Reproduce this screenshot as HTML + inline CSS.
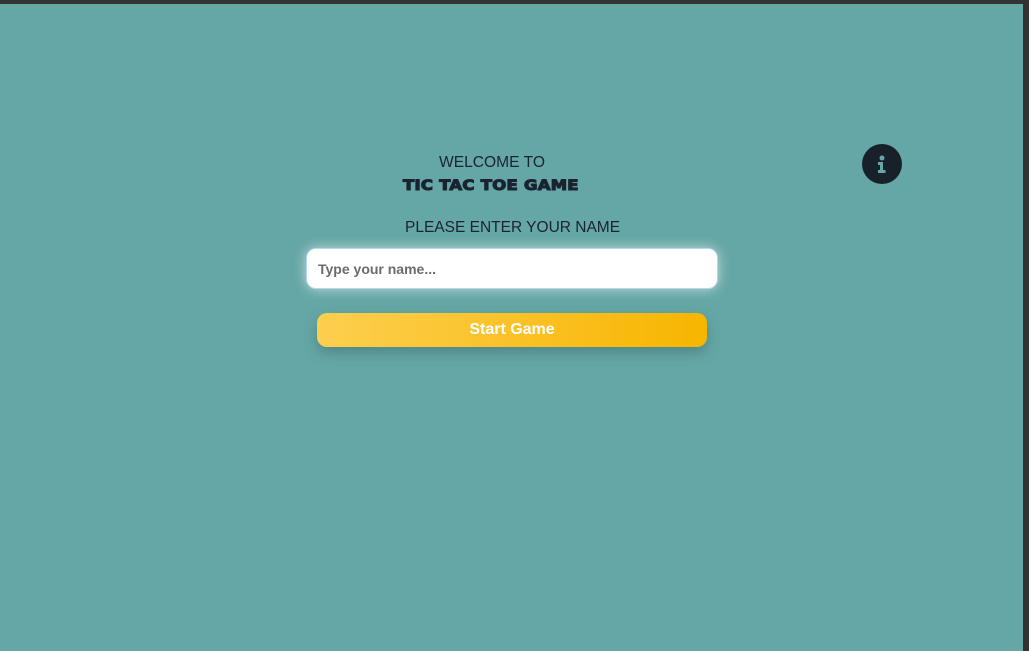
<!DOCTYPE html>
<html><head><style>
html,body{margin:0;padding:0;width:1029px;height:651px;overflow:hidden;background:#65a7a6;font-family:"Liberation Sans",sans-serif;position:relative}
.top{position:absolute;left:0;top:0;width:1029px;height:4px;background:#333}
.right{position:absolute;right:0;top:0;width:6px;height:651px;background:#333}
.t{position:absolute;color:#1b2330;white-space:nowrap}
.inp{position:absolute;left:306px;top:248px;width:410px;height:39px;background:#fff;border-radius:10px;border:1px solid #b7d8ea;box-shadow:0 0 12px rgba(255,255,255,.6)}
.inp span{position:absolute;left:11px;top:12px;font-size:14px;font-weight:bold;color:#6b6b6b}
.btn{position:absolute;left:317px;top:313px;width:390px;height:34px;border-radius:10px;background:linear-gradient(90deg,#fdcf4f,#f8b500);box-shadow:0 6px 12px rgba(40,80,80,.35);color:#fff;font-weight:bold;font-size:16px;text-align:center;line-height:34px}
.info{position:absolute;left:862px;top:144px;width:40px;height:40px;border-radius:50%;background:#18202a}
</style></head><body>
<div class="top"></div><div class="right"></div>
<div class="t" style="left:439px;top:154px;font-size:15.6px">WELCOME TO</div>
<div class="t" style="left:403px;top:177px;font-size:16.4px;font-weight:900;letter-spacing:0.3px;font-family:'DejaVu Sans',sans-serif;-webkit-text-stroke:1.3px #1b2330;transform:scaleY(0.85);transform-origin:left top">TIC TAC TOE GAME</div>
<div class="t" style="left:405px;top:219px;font-size:15.5px">PLEASE ENTER YOUR NAME</div>
<div class="inp"><span>Type your name...</span></div>
<div class="btn">Start Game</div>
<div class="info"><svg width="40" height="40" viewBox="0 0 40 40"><circle cx="20" cy="14" r="2.5" fill="#65a7a6"/><path d="M16 18h5v8h2.5v3h-7.5v-3h2v-5h-2z" fill="#65a7a6"/></svg></div>
</body></html>
